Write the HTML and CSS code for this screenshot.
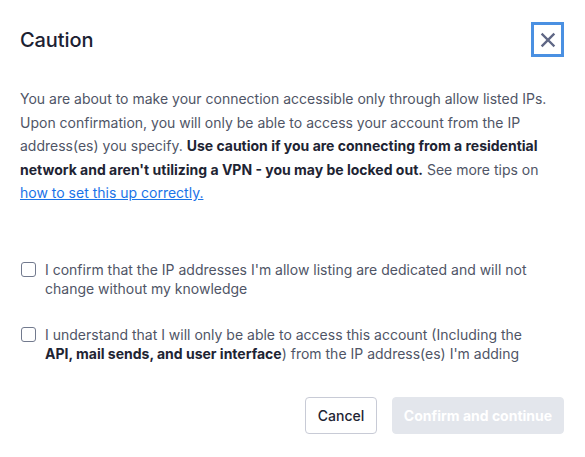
FILE: index.html
```html
<!DOCTYPE html>
<html>
<head>
<meta charset="utf-8">
<link rel="stylesheet" href="styles.css">
</head>
<body>
<div class="modal">
  <div class="header">
    <h2 class="title">Caution</h2>
    <button class="close" aria-label="Close">
      <svg width="16" height="16" viewBox="0 0 16 16"><path d="M2.5 2.5 L13.5 13.5 M13.5 2.5 L2.5 13.5" stroke="#5f6785" stroke-width="2.4" stroke-linecap="square"/></svg>
    </button>
  </div>
  <p class="body">You are about to make your connection accessible only through allow listed IPs. Upon confirmation, you will only be able to access your account from the IP address(es) you specify. <strong>Use caution if you are connecting from a residential network and aren't utilizing a VPN - you may be locked out.</strong> See more tips on <a href="#" class="link">how to set this up correctly.</a></p>
  <div class="checks">
    <label class="check">
      <span class="box"></span>
      <span class="label">I confirm that the IP addresses I'm allow listing are dedicated and will not change without my knowledge</span>
    </label>
    <label class="check">
      <span class="box"></span>
      <span class="label">I understand that I will only be able to access this account (Including the <strong>API, mail sends, and user interface</strong>) from the IP address(es) I'm adding</span>
    </label>
  </div>
  <div class="actions">
    <button class="btn btn-secondary">Cancel</button>
    <button class="btn btn-primary">Confirm and continue</button>
  </div>
</div>
</body>
</html>
```
FILE: styles.css
```css
html, body {
  margin: 0;
  padding: 0;
  background: #ffffff;
}
body {
  font-family: Inter, "Noto Sans", sans-serif;
  width: 585px;
}
.modal {
  padding: 22px 21px 20px 20px;
  box-sizing: border-box;
}
.header {
  display: flex;
  justify-content: space-between;
  align-items: center;
  height: 35px;
}
.title {
  margin: 0;
  font-size: 20px;
  font-weight: 500;
  color: #1b2132;
  letter-spacing: -0.1px;
}
.close {
  width: 33px;
  height: 35px;
  box-sizing: border-box;
  border: 3px solid #4a90e2;
  background: #fff;
  padding: 0;
  display: flex;
  align-items: center;
  justify-content: center;
}
.body {
  margin: 30px 0 0 0;
  font-size: 14px;
  line-height: 23.5px;
  color: #4f5566;
}
.body strong {
  color: #1e2433;
  font-weight: 700;
}
.link {
  color: #1a73e8;
  text-decoration: underline;
}
.checks {
  margin-top: 55px;
  display: flex;
  flex-direction: column;
  gap: 26px;
}
.check {
  display: flex;
  align-items: flex-start;
  gap: 9px;
  font-size: 14px;
  line-height: 19.5px;
  color: #4f5566;
  padding-left: 1px;
}
.label {
  max-width: 490px;
}
.check strong {
  color: #1e2433;
  font-weight: 700;
}
.box {
  flex: none;
  width: 15px;
  height: 15px;
  margin-top: 2px;
  box-sizing: border-box;
  border: 1px solid #727a8e;
  border-radius: 3px;
  background: #fff;
}
.actions {
  margin-top: 33px;
  display: flex;
  justify-content: flex-end;
  gap: 15px;
}
.btn {
  height: 37px;
  border-radius: 4px;
  font-family: Inter, "Noto Sans", sans-serif;
  font-size: 14px;
  padding: 0;
  white-space: nowrap;
  box-sizing: border-box;
}
.btn-secondary {
  width: 72px;
  background: #fff;
  border: 1px solid #c8cbd6;
  color: #1e2433;
  font-weight: 500;
}
.btn-primary {
  width: 172px;
  background: #e3e6ec;
  border: 1px solid #e3e6ec;
  color: #ffffff;
  font-weight: 700;
}
```
